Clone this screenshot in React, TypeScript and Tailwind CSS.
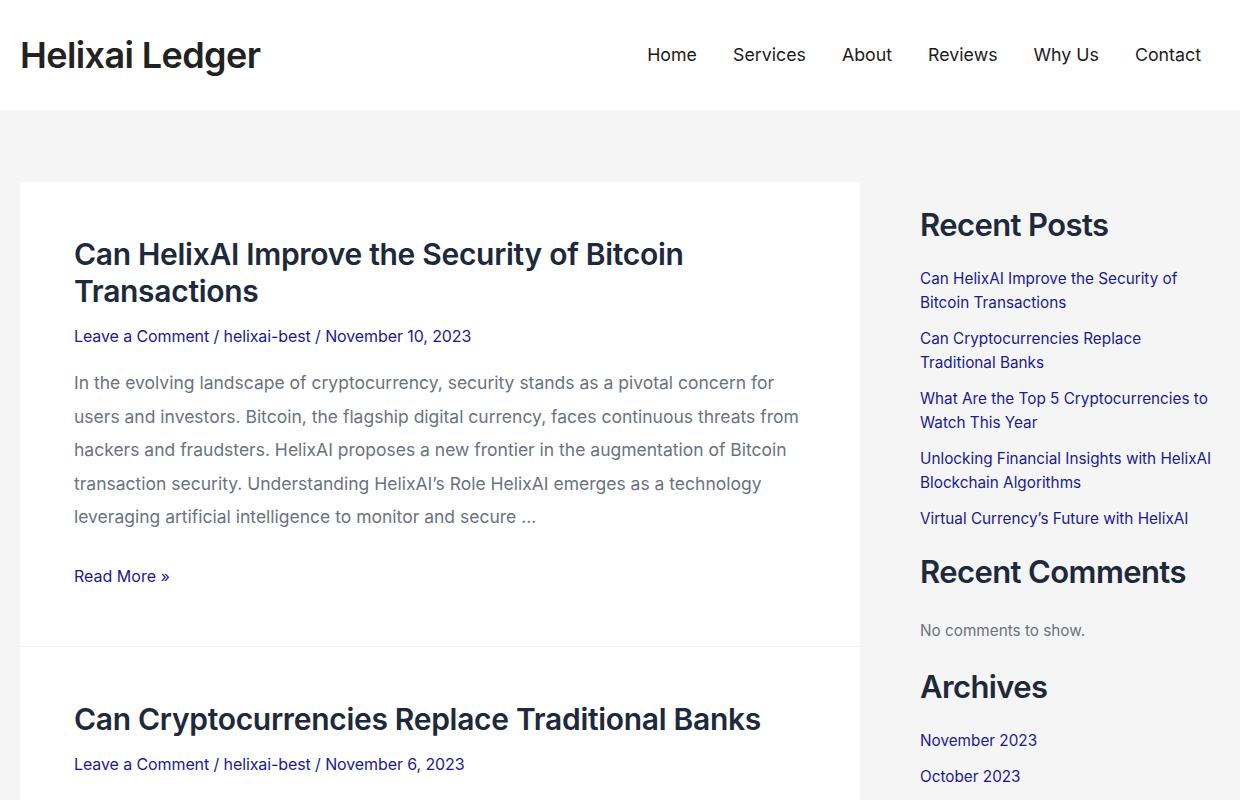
import React from "react";

const heading = { fontFamily: "Inter, 'Noto Sans', sans-serif" };

function Meta({ date }: { date: string }) {
  return (
    <div className="text-[16px] leading-[24px] tracking-[-0.1px] text-[#1a1a8f] mt-[14px]">
      <span>Leave a Comment</span>
      <span> / </span>
      <span>helixai-best</span>
      <span> / </span>
      <span>{date}</span>
    </div>
  );
}

export default function App() {
  const posts = [
    "Can HelixAI Improve the Security of Bitcoin Transactions",
    "Can Cryptocurrencies Replace Traditional Banks",
    "What Are the Top 5 Cryptocurrencies to Watch This Year",
    "Unlocking Financial Insights with HelixAI Blockchain Algorithms",
    "Virtual Currency’s Future with HelixAI",
  ];
  return (
    <div className="min-h-[800px] bg-[#f5f5f6]" style={{ fontFamily: "Inter, 'Noto Sans', sans-serif" }}>
      <header className="h-[110px] bg-white flex items-center justify-between pl-5 pr-[39px]">
        <div className="text-[36px] font-semibold tracking-[-0.6px] text-[#222]" style={heading}>
          Helixai Ledger
        </div>
        <nav className="flex items-center text-[17.8px] text-[#1b1b1b]">
          {["Home", "Services", "About", "Reviews", "Why Us", "Contact"].map((n, i) => (
            <span key={n} className={i === 0 ? "" : "ml-[36px]"}>
              {n}
            </span>
          ))}
        </nav>
      </header>
      <div className="flex px-5 pt-[72px] gap-[60px]">
        <main className="w-[840px] shrink-0 flex flex-col gap-px">
          <article className="bg-white px-[54px] pt-[54px] pb-[58px]">
            <h2 className="text-[30px] leading-[37px] font-semibold tracking-[-0.3px] text-[#1e293b]" style={heading}>
              Can HelixAI Improve the Security of Bitcoin Transactions
            </h2>
            <Meta date="November 10, 2023" />
            <p className="mt-[18px] text-[17.5px] leading-[33.5px] text-[#6b7280]">
              In the evolving landscape of cryptocurrency, security stands as a pivotal concern for users and investors. Bitcoin, the flagship digital currency, faces continuous threats from hackers and fraudsters. HelixAI proposes a new frontier in the augmentation of Bitcoin transaction security. Understanding HelixAI’s Role HelixAI emerges as a technology leveraging artificial intelligence to monitor and secure …
            </p>
            <div className="mt-[30px] text-[16px] leading-[24px] text-[#1a1a8f]">Read More »</div>
          </article>
          <article className="bg-white px-[54px] pt-[54px] pb-[58px]">
            <h2 className="text-[30px] leading-[37px] font-semibold tracking-[-0.3px] text-[#1e293b]" style={heading}>
              Can Cryptocurrencies Replace Traditional Banks
            </h2>
            <Meta date="November 6, 2023" />
          </article>
        </main>
        <aside className="w-[300px] pt-[23px]">
          <h3 className="text-[31px] leading-[40px] font-semibold tracking-[-0.6px] text-[#1e293b]" style={heading}>
            Recent Posts
          </h3>
          <ul className="mt-[22px] flex flex-col gap-[12px]">
            {posts.map((p) => (
              <li key={p} className="text-[15.3px] leading-[24px] text-[#1a1a8f]">
                {p}
              </li>
            ))}
          </ul>
          <h3 className="mt-[21px] text-[31px] leading-[40px] font-semibold tracking-[-0.6px] text-[#1e293b]" style={heading}>
            Recent Comments
          </h3>
          <p className="mt-[27px] text-[15.3px] leading-[24px] text-[#6b7280]">No comments to show.</p>
          <h3 className="mt-[24px] text-[31px] leading-[40px] font-semibold tracking-[-0.6px] text-[#1e293b]" style={heading}>
            Archives
          </h3>
          <ul className="mt-[22px] flex flex-col gap-[12px]">
            <li className="text-[15.3px] leading-[24px] text-[#1a1a8f]">November 2023</li>
            <li className="text-[15.3px] leading-[24px] text-[#1a1a8f]">October 2023</li>
          </ul>
        </aside>
      </div>
    </div>
  );
}
